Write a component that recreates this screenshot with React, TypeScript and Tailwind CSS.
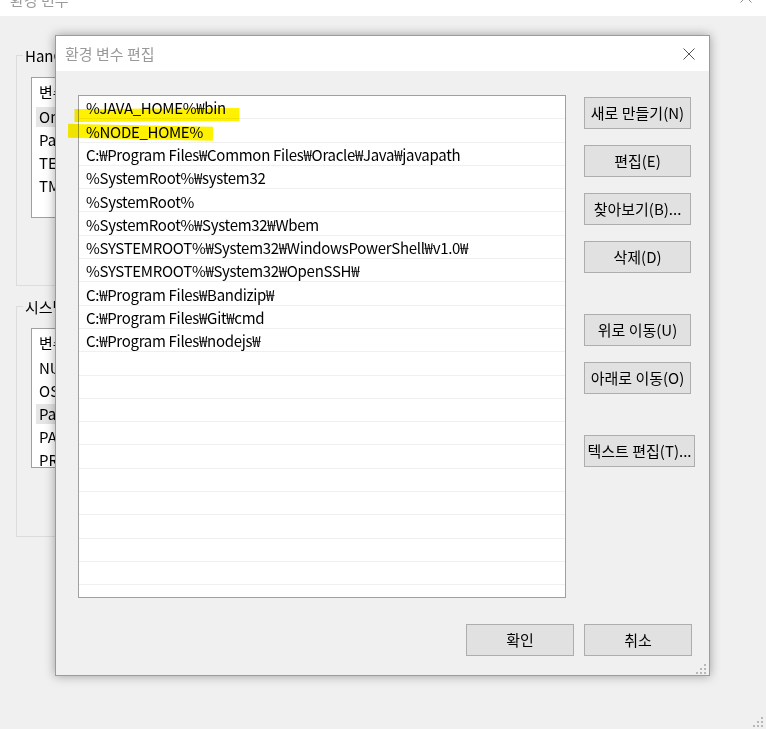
import React from "react";

const paths = [
  "%JAVA_HOME%₩bin",
  "%NODE_HOME%",
  "C:₩Program Files₩Common Files₩Oracle₩Java₩javapath",
  "%SystemRoot%₩system32",
  "%SystemRoot%",
  "%SystemRoot%₩System32₩Wbem",
  "%SYSTEMROOT%₩System32₩WindowsPowerShell₩v1.0₩",
  "%SYSTEMROOT%₩System32₩OpenSSH₩",
  "C:₩Program Files₩Bandizip₩",
  "C:₩Program Files₩Git₩cmd",
  "C:₩Program Files₩nodejs₩",
];

const rows: string[] = [...paths];
while (rows.length < 22) rows.push("");

function Grip() {
  const dots: [number, number][] = [
    [8, 0],
    [4, 4],
    [8, 4],
    [0, 8],
    [4, 8],
    [8, 8],
  ];
  return (
    <svg width="10" height="10" viewBox="0 0 10 10">
      {dots.map(([x, y], i) => (
        <rect key={i} x={x} y={y} width="2" height="2" fill="#b8b8b8" />
      ))}
    </svg>
  );
}

function CloseX({ color }: { color: string }) {
  return (
    <svg width="12" height="12" viewBox="0 0 12 12">
      <line x1="0.5" y1="0.5" x2="11.5" y2="11.5" stroke={color} strokeWidth="1" />
      <line x1="11.5" y1="0.5" x2="0.5" y2="11.5" stroke={color} strokeWidth="1" />
    </svg>
  );
}

function BgList({
  items,
  selected,
  height,
}: {
  items: string[][];
  selected: number;
  height: string;
}) {
  return (
    <div className={"ml-[14px] mt-[21px] w-[560px] border border-[#a0a0a0] bg-white overflow-hidden " + height}>
      <div className="h-[27px] flex items-center pl-[7px] pt-[2px]">
        <span className="w-[200px]">변수</span>
        <span>값</span>
      </div>
      {items.map((it, i) => (
        <div key={i} className="h-[23px] flex items-center pl-[4px] pr-[4px]">
          <div
            className={
              i === selected
                ? "h-[20px] w-full flex items-center pl-[3px] pt-[2px] bg-[#e5e5e5]"
                : "h-[20px] w-full flex items-center pl-[3px] pt-[2px]"
            }
          >
            <span className="w-[200px] whitespace-nowrap">{it[0]}</span>
            <span className="whitespace-nowrap">{it[1]}</span>
          </div>
        </div>
      ))}
    </div>
  );
}

export default function App() {
  return (
    <div className="relative w-[766px] h-[732px] overflow-hidden bg-white text-[15px] text-black font-['Noto_Sans_CJK_KR','Noto_Sans',sans-serif]">
      {/* Background window */}
      <div className="flex flex-col h-[729px]">
        <div className="h-[16px] bg-white overflow-hidden">
          <div className="-mt-[15px] h-[30px] flex items-center justify-between pl-[10px] pr-[14px]">
            <span className="text-[#9a9a9a]">환경 변수</span>
            <div className="-mt-[6px]">
              <CloseX color="#8a8a8a" />
            </div>
          </div>
        </div>
        <div className="relative flex-1 bg-[#f0f0f0] pl-[16px] pt-[39px]">
          <div className="relative w-[680px] h-[231px] border border-[#dcdcdc]">
            <span className="absolute -top-[11px] left-[6px] px-[2px] bg-[#f0f0f0] leading-[22px] whitespace-nowrap">
              HanCom에 대한 사용자 변수(U)
            </span>
            <BgList
              height="h-[141px]"
              selected={0}
              items={[
                ["OneDrive", "C:₩Users₩HanCom₩OneDrive"],
                ["Path", "C:₩Users₩HanCom₩AppData"],
                ["TEMP", "%USERPROFILE%₩AppData₩Local₩Temp"],
                ["TMP", "%USERPROFILE%₩AppData₩Local₩Temp"],
              ]}
            />
          </div>
          <div className="relative mt-[20px] w-[680px] h-[231px] border border-[#dcdcdc]">
            <span className="absolute -top-[11px] left-[6px] px-[2px] bg-[#f0f0f0] leading-[22px] whitespace-nowrap">
              시스템 변수(S)
            </span>
            <BgList
              height="h-[140px]"
              selected={2}
              items={[
                ["NUMBER_OF_PROCESSORS", "8"],
                ["OS", "Windows_NT"],
                ["Path", "C:₩Program Files₩Common Files"],
                ["PATHEXT", ".COM;.EXE;.BAT;.CMD"],
                ["PROCESSOR_ARCHITECTURE", "AMD64"],
              ]}
            />
          </div>
          <div className="absolute right-[3px] bottom-[2px]">
            <Grip />
          </div>
        </div>
      </div>

      {/* Dialog window */}
      <div className="absolute left-[55px] top-[35px] w-[655px] h-[641px] border border-[#9b9b9b] bg-[#f0f0f0] shadow-[0_0_10px_rgba(0,0,0,0.35)] flex flex-col">
        <div className="h-[35px] bg-white flex items-center justify-between pl-[9px] pr-[14px]">
          <span className="text-[#999999] pt-[1px]">환경 변수 편집</span>
          <CloseX color="#555555" />
        </div>
        <div className="relative flex-1 flex flex-col">
          <div className="flex pl-[22px] pt-[24px]">
            <div className="w-[488px] h-[503px] border border-[#a0a0a0] bg-white overflow-hidden">
              {rows.map((r, i) => (
                <div
                  key={i}
                  className="h-[23.3px] border-b border-[#f0f0f0] flex items-center pl-[7px] pt-[3px] whitespace-nowrap tracking-[-0.3px]"
                >
                  {r}
                </div>
              ))}
            </div>
            <div className="ml-[18px] mt-[2px] flex flex-col">
              <button className="w-[107px] h-[32px] border border-[#adadad] bg-[#e1e1e1] flex items-center justify-center pt-[1px] whitespace-nowrap">
                새로 만들기(N)
              </button>
              <button className="mt-[16px] w-[107px] h-[32px] border border-[#adadad] bg-[#e1e1e1] flex items-center justify-center pt-[1px] whitespace-nowrap">
                편집(E)
              </button>
              <button className="mt-[16px] w-[107px] h-[32px] border border-[#adadad] bg-[#e1e1e1] flex items-center justify-center pt-[1px] whitespace-nowrap">
                찾아보기(B)...
              </button>
              <button className="mt-[16px] w-[107px] h-[32px] border border-[#adadad] bg-[#e1e1e1] flex items-center justify-center pt-[1px] whitespace-nowrap">
                삭제(D)
              </button>
              <button className="mt-[41px] w-[107px] h-[32px] border border-[#adadad] bg-[#e1e1e1] flex items-center justify-center pt-[1px] whitespace-nowrap">
                위로 이동(U)
              </button>
              <button className="mt-[16px] w-[107px] h-[32px] border border-[#adadad] bg-[#e1e1e1] flex items-center justify-center pt-[1px] whitespace-nowrap">
                아래로 이동(O)
              </button>
              <button className="mt-[41px] w-[111px] h-[32px] border border-[#adadad] bg-[#e1e1e1] flex items-center justify-center pt-[1px] whitespace-nowrap">
                텍스트 편집(T)...
              </button>
            </div>
          </div>
          <div className="flex justify-end gap-[10px] pr-[17px] mt-[26px]">
            <button className="w-[108px] h-[32px] border border-[#adadad] bg-[#e1e1e1] flex items-center justify-center pt-[1px]">
              확인
            </button>
            <button className="w-[108px] h-[32px] border border-[#adadad] bg-[#e1e1e1] flex items-center justify-center pt-[1px]">
              취소
            </button>
          </div>
          <div className="absolute right-[3px] bottom-[1px]">
            <Grip />
          </div>
        </div>
      </div>

      {/* Yellow highlighter marks */}
      <svg
        className="absolute left-0 top-0 pointer-events-none mix-blend-multiply"
        width="766"
        height="732"
        viewBox="0 0 766 732"
      >
        <path d="M81 115.5 L233 114.5" stroke="#fff200" strokeWidth="13" strokeLinecap="square" fill="none" />
        <path d="M75 131 L206 133.5" stroke="#fff200" strokeWidth="14" strokeLinecap="square" fill="none" />
      </svg>
    </div>
  );
}
